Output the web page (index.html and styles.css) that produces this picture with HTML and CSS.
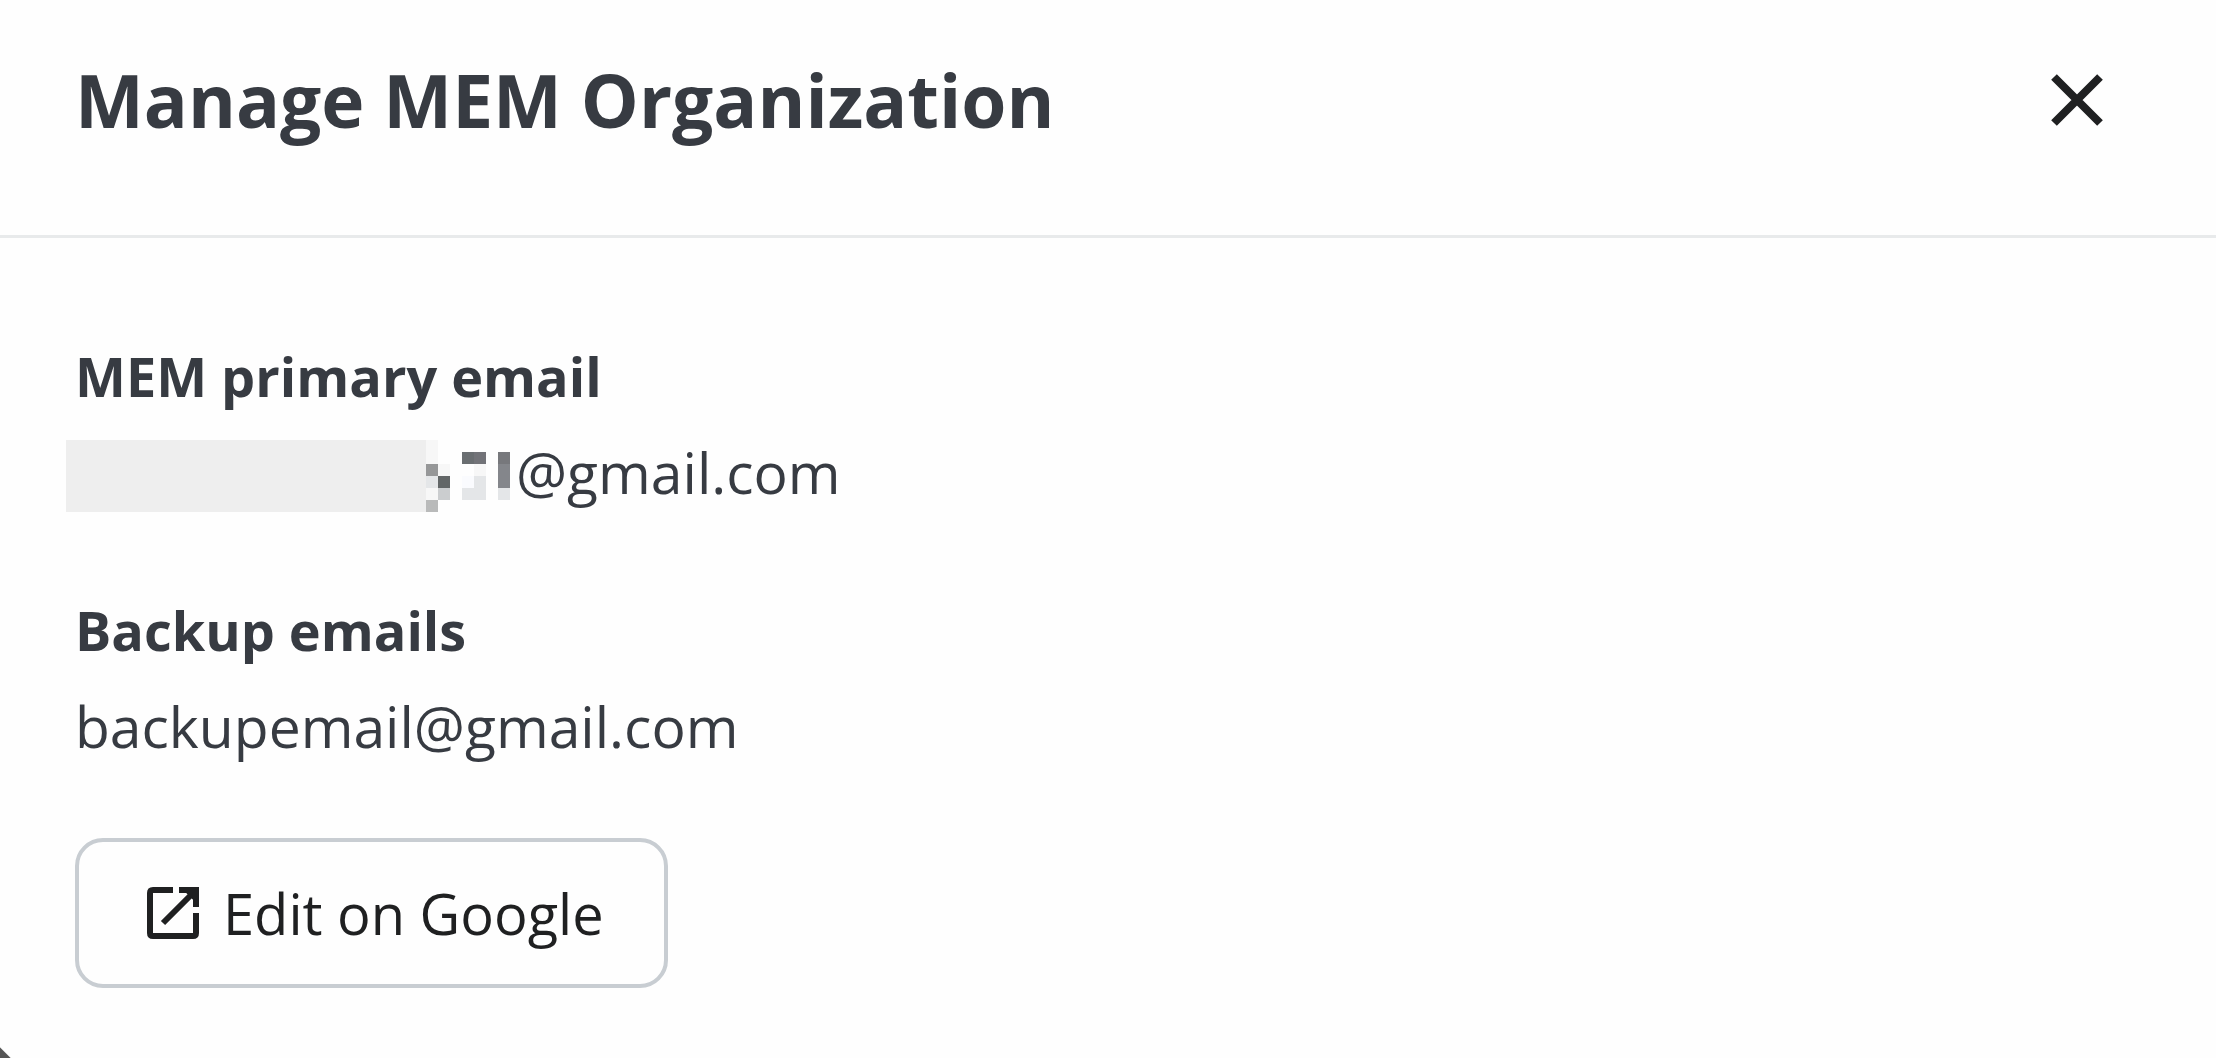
FILE: index.html
```html
<!DOCTYPE html>
<html lang="en">
<head>
  <meta charset="UTF-8" />
  <meta name="viewport" content="width=device-width, initial-scale=1.0"/>
  <title>Manage MEM Organization</title>
  <link rel="stylesheet" href="styles.css">
</head>
<body>
  <main class="dialog">
    <header class="dialog-header">
      <h1>Manage MEM Organization</h1>
      <button class="close" type="button" aria-label="Close">
        <svg viewBox="0 0 52 52"><path d="M3 3 49 49M49 3 3 49"/></svg>
      </button>
    </header>

    <div class="dialog-body">
      <section class="field">
        <h2>MEM primary email</h2>
        <p class="masked">
          <!-- hidden part of the address -->
          <svg class="mask" viewBox="0 0 444 72" shape-rendering="crispEdges" aria-hidden="true">
            <path fill="#eeeeee" d="M0 0h360v72H0z"/>
            <path fill="#f7f7f7" d="M360 0h12v24h-12zM360 48h12v12h-12zM372 24h12v12h-12zM408 24h12v12h-12z"/>
            <path fill="#969798" d="M360 24h12v12h-12z"/>
            <path fill="#e4e6e8" d="M360 36h12v12h-12zM408 36h12v24h-12zM396 48h12v12h-12zM432 48h12v12h-12z"/>
            <path fill="#626667" d="M372 36h12v12h-12z"/>
            <path fill="#cbcdcf" d="M372 48h12v12h-12z"/>
            <path fill="#b9baba" d="M360 60h12v12h-12z"/>
            <path fill="#6a6e71" d="M396 12h12v12h-12z"/>
            <path fill="#727378" d="M408 12h12v12h-12z"/>
            <path fill="#fafbfe" d="M396 36h12v12h-12z"/>
            <path fill="#77787c" d="M432 12h12v12h-12z"/>
            <path fill="#84868b" d="M432 24h12v24h-12z"/>
          </svg>
          <span>@gmail.com</span>
        </p>
      </section>

      <section class="field">
        <h2>Backup emails</h2>
        <p>backupemail@gmail.com</p>
      </section>

      <button class="edit" type="button">
        <svg viewBox="0 0 52 52">
          <path d="M26 3H6Q3 3 3 6V46Q3 49 6 49H46Q49 49 49 46V26"/>
          <path d="M32 3H49V20M48 4 16 36"/>
          <path class="tip" d="M41 5H47V11z"/>
        </svg>
        Edit on Google
      </button>
    </div>
  </main>
</body>
</html>
```
FILE: styles.css
```css
* {
  box-sizing: border-box;
}
body {
  margin: 0;
  font-family: "Open Sans", sans-serif;
  color: #373b42;
}
h1, h2, p {
  margin: 0;
}
.dialog {
  min-height: 100vh;
  background: linear-gradient(45deg, #555 7px, #fefefe 8px);
}
.dialog-header {
  display: flex;
  align-items: center;
  justify-content: space-between;
  padding: 50px 113px 85px 75px;
  border-bottom: 3px solid #e8eaeb;
}
h1 {
  font-size: 73px;
  line-height: 100px;
}
button {
  font: inherit;
  background: none;
  color: #1f2021;
  cursor: pointer;
}
button svg {
  width: 52px;
  height: 52px;
  fill: none;
  stroke: currentColor;
  stroke-width: 6;
}
.close {
  display: flex;
  padding: 0;
  border: 0;
}
.close svg {
  stroke-width: 8;
}
.dialog-body {
  padding: 102px 75px 70px;
}
.field {
  margin-bottom: 90px;
}
h2 {
  margin-bottom: 28px;
  font-size: 54px;
  line-height: 72px;
}
p {
  font-size: 57px;
  line-height: 64px;
}
.masked {
  display: flex;
  gap: 6px;
  margin-left: -9px;
}
.mask {
  width: 444px;
  height: 72px;
  margin-bottom: -8px;
}
.field:last-of-type {
  margin-bottom: 80px;
}
.edit {
  display: flex;
  align-items: center;
  gap: 24px;
  padding: 35px 60px 35px 68px;
  font-size: 56px;
  line-height: 72px;
  border: 4px solid #c8cdd2;
  border-radius: 28px;
}
.edit .tip {
  fill: currentColor;
  stroke-width: 4;
}
```
